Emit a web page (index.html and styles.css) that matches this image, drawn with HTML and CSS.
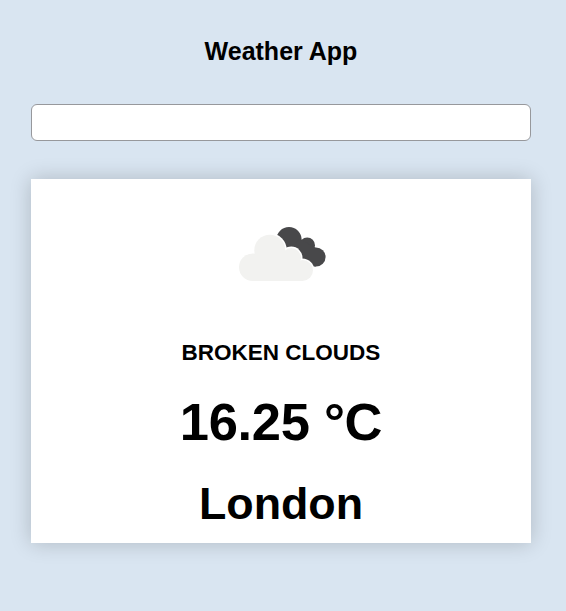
FILE: index.html
```html
<!DOCTYPE html>
<html lang="en">
<head>
<meta charset="utf-8">
<title>Weather App</title>
<link rel="stylesheet" href="styles.css">
</head>
<body>
<main class="app">
<h1 class="title">Weather App</h1>
<input class="search" type="text" aria-label="City">
<section class="card">
<svg class="icon" viewBox="4 0 102 75" width="102" height="75">
<g fill="#48484a">
<circle cx="59" cy="24.6" r="12.6"/>
<circle cx="77.2" cy="30.2" r="7.8"/>
<circle cx="86" cy="42" r="9.6"/>
<path d="M57 34L70 24 86 33 86 51.6 76 51z"/>
</g>
<g fill="#fff">
<circle cx="39.8" cy="35.3" r="17"/>
<circle cx="61.3" cy="42.8" r="11.2"/>
<circle cx="72.3" cy="55.5" r="12"/>
</g>
<g fill="#f2f2f0">
<circle cx="22.7" cy="52.2" r="13.7"/>
<circle cx="39.8" cy="35.3" r="15.5"/>
<circle cx="61.3" cy="42.8" r="9.7"/>
<circle cx="72.6" cy="55.5" r="10.4"/>
<path d="M22.7 65.9V42L30 34 52 36 70 46 72.6 65.9z"/>
</g>
</svg>
<p class="condition">BROKEN CLOUDS</p>
<p class="temp">16.25 °C</p>
<p class="city">London</p>
</section>
</main>
</body>
</html>
```
FILE: styles.css
```css
body { margin: 0; min-height: 611px; background: #d9e5f1; color: #000; font-family: "Liberation Sans", Arial, sans-serif; font-weight: bold; }
.app { width: 500px; margin-left: 31px; padding-top: 36px; display: flex; flex-direction: column; text-align: center; }
.title { margin: 0; font-size: 25px; line-height: 30px; }
.search { box-sizing: border-box; width: 500px; height: 37px; margin: 38px 0; padding: 0 10px; border: 1px solid #97989c; border-radius: 6px; background: #fff; outline: 0; }
.card { height: 364px; box-sizing: border-box; padding-top: 36px; background: #fff; box-shadow: 0 0 20px rgba(0, 0, 0, .2); }
.icon { display: block; margin: 0 auto; position: relative; left: 4px; }
p { margin: 0; white-space: nowrap; }
.condition { margin-top: 50px; font-size: 22.5px; line-height: 26px; }
.temp { margin-top: 26px; font-size: 52.5px; line-height: 60px; letter-spacing: -.3px; }
.city { margin-top: 26px; font-size: 44.8px; line-height: 50px; }
```
